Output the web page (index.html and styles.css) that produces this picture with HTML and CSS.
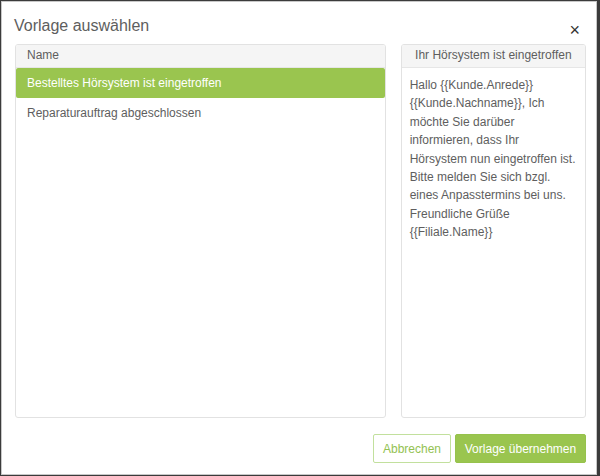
FILE: index.html
```html
<!DOCTYPE html>
<html lang="de">
<head>
<meta charset="utf-8">
<title>Vorlage auswählen</title>
<link rel="stylesheet" href="styles.css">
</head>
<body>
<div class="dialog">
  <div class="dialog-header">
    <h1 class="dialog-title">Vorlage auswählen</h1>
    <button class="close" type="button" aria-label="Schließen">×</button>
  </div>
  <div class="dialog-body">
    <div class="panel panel-list">
      <div class="panel-heading left">Name</div>
      <ul class="list">
        <li class="list-item active">Bestelltes Hörsystem ist eingetroffen</li>
        <li class="list-item">Reparaturauftrag abgeschlossen</li>
      </ul>
    </div>
    <div class="panel panel-preview">
      <div class="panel-heading center">Ihr Hörsystem ist eingetroffen</div>
      <div class="preview-text">Hallo {{Kunde.Anrede}} {{Kunde.Nachname}}, Ich möchte Sie darüber informieren, dass Ihr Hörsystem nun eingetroffen ist. Bitte melden Sie sich bzgl. eines Anpasstermins bei uns.<br>Freundliche Grüße<br>{{Filiale.Name}}</div>
    </div>
  </div>
  <div class="dialog-footer">
    <button class="btn btn-outline" type="button">Abbrechen</button>
    <button class="btn btn-primary" type="button">Vorlage übernehmen</button>
  </div>
</div>
</body>
</html>
```

FILE: styles.css
```css
* { box-sizing: border-box; }
html, body { margin: 0; padding: 0; }
body {
  background: #3b3b3b;
  width: 600px;
  height: 476px;
  overflow: hidden;
  font-family: "Liberation Sans", Arial, sans-serif;
  font-size: 12px;
  line-height: 1.42857;
  color: #5e5e5e;
  padding: 1px 3px 1px 1px;
}
.dialog {
  width: 596px;
  height: 474px;
  background: #fff;
  border: 1px solid #c8c8c8;
  display: flex;
  flex-direction: column;
}
.dialog-header {
  display: flex;
  align-items: flex-start;
  justify-content: space-between;
  padding: 12px 16px 0 12px;
  height: 42px;
}
.dialog-title {
  margin: 0;
  font-weight: normal;
  font-size: 16px;
  color: #5e5e5e;
  line-height: 24px;
}
.close {
  border: 0;
  background: none;
  padding: 0;
  font-family: "Liberation Sans", Arial, sans-serif;
  font-size: 18px;
  line-height: 18px;
  color: #333;
  margin-top: 7px;
  cursor: pointer;
}
.dialog-body {
  display: flex;
  gap: 15px;
  padding: 0 10px 0 13px;
  height: 374px;
}
.panel {
  border: 1px solid #e2e2e2;
  border-radius: 3px;
  display: flex;
  flex-direction: column;
  overflow: hidden;
}
.panel-list { width: 372px; }
.panel-preview { width: 186px; }
.panel-heading {
  background: #f5f5f5;
  border-bottom: 1px solid #e6e6e6;
  height: 23px;
  line-height: 21px;
  padding: 0 11px;
  color: #5e5e5e;
}
.panel-heading.center { text-align: center; padding: 0 4px; }
.list { list-style: none; margin: 0; padding: 0; }
.list-item {
  height: 30px;
  line-height: 30px;
  padding: 0 11px;
  color: #5e5e5e;
  border-radius: 2px;
}
.list-item.active {
  background: #9ac54f;
  color: #fff;
}
.preview-text {
  padding: 8px 8px 0 8px;
  line-height: 18.4px;
  color: #5e5e5e;
}
.dialog-footer {
  display: flex;
  justify-content: flex-end;
  gap: 4px;
  padding: 16px 10px 0 0;
}
.btn {
  height: 29px;
  font-family: "Liberation Sans", Arial, sans-serif;
  font-size: 12px;
  border-radius: 2px;
  padding: 0 8px;
  white-space: nowrap;
  cursor: pointer;
}
.btn-outline {
  background: #fff;
  border: 1px solid #c2e09d;
  color: #93c252;
  width: 78px;
}
.btn-primary {
  background: #9ac54f;
  border: 1px solid #96c24c;
  color: #fff;
  width: 131px;
}
```
